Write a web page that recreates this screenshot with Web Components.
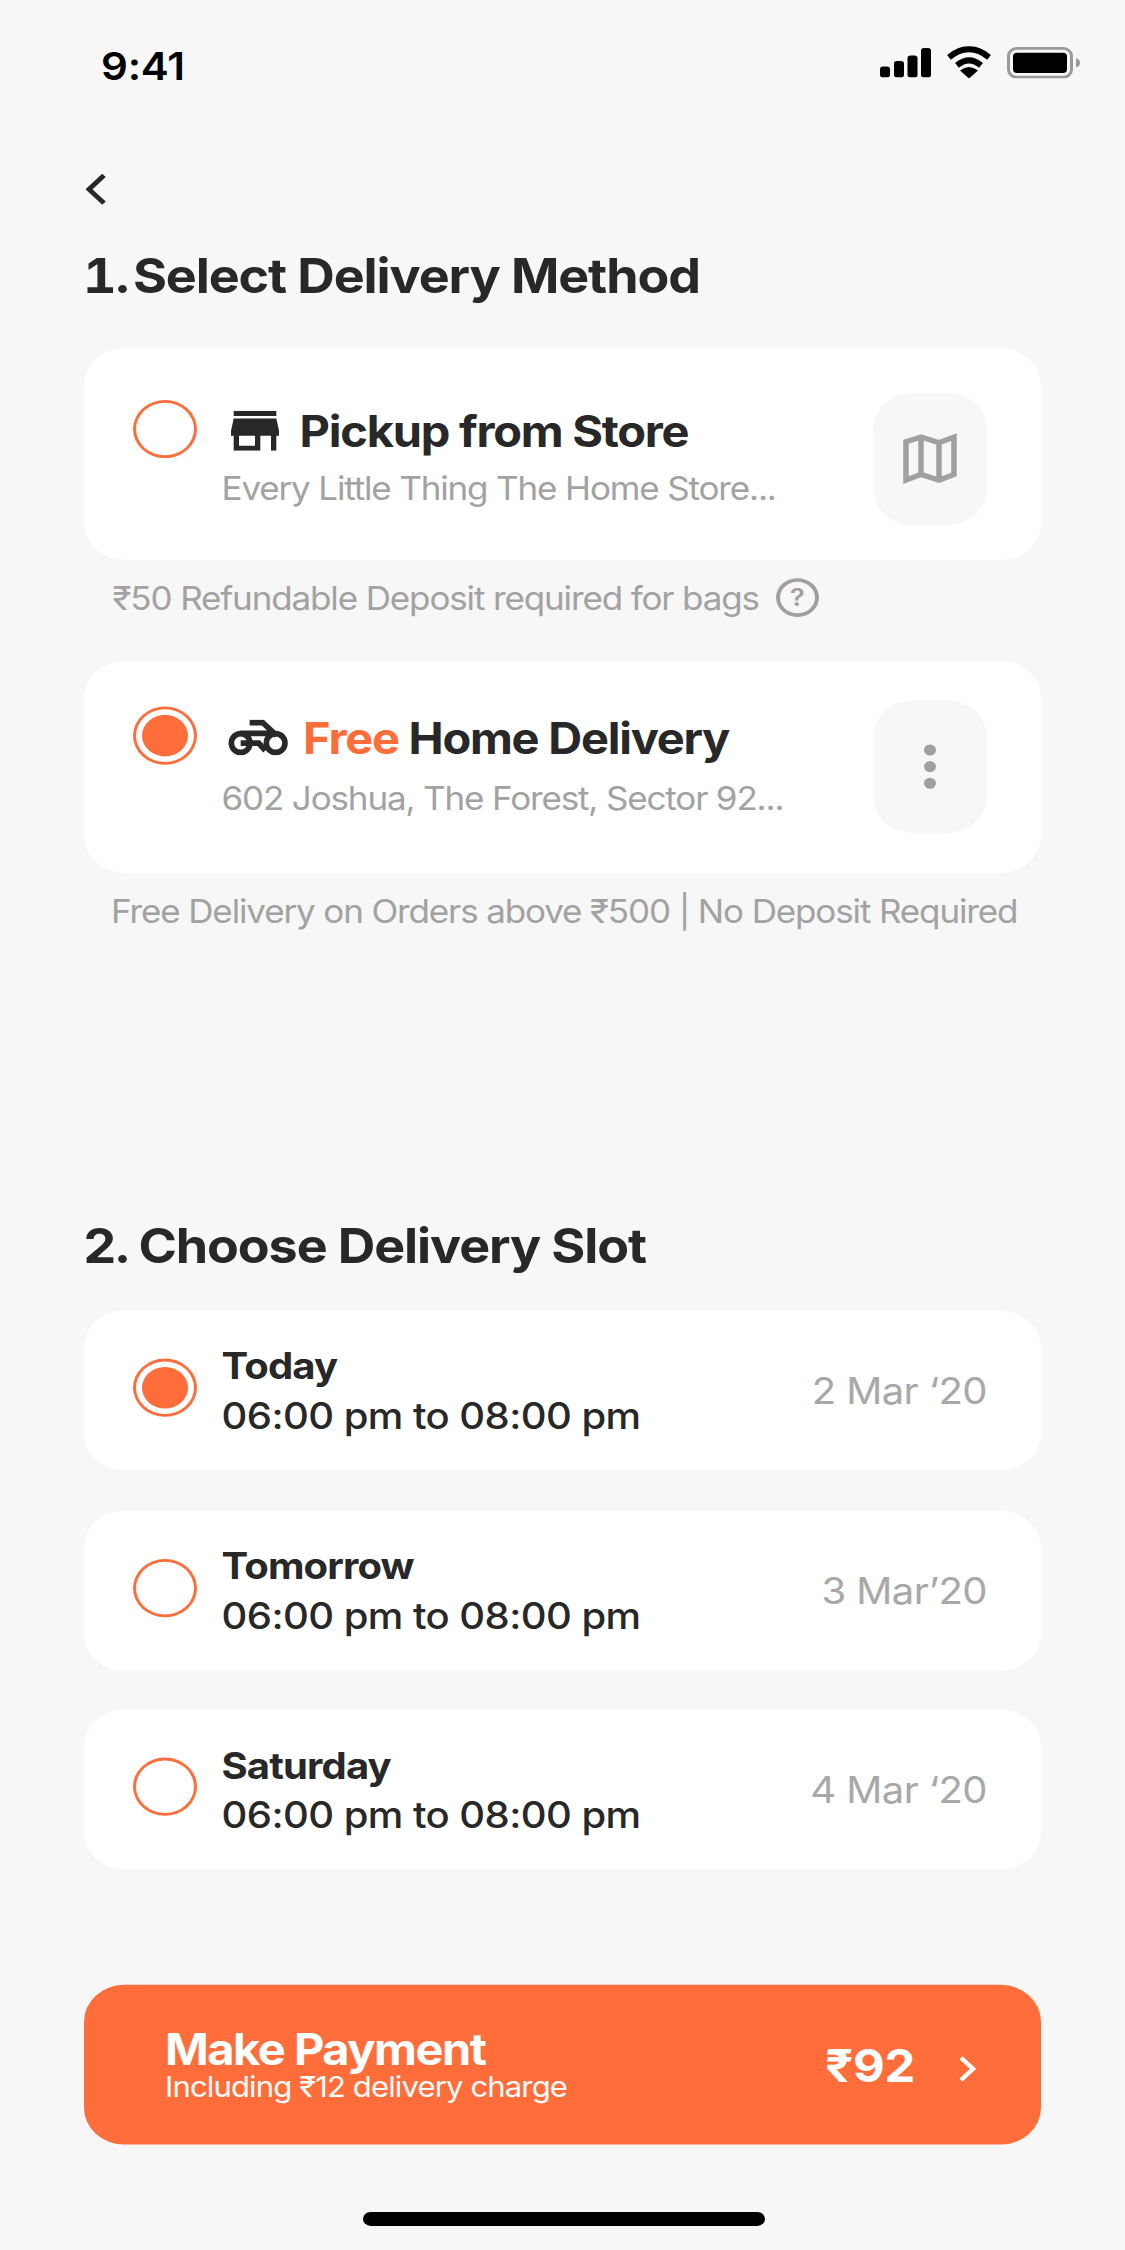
<!DOCTYPE html>
<html lang="en"><head><meta charset="utf-8"><title>Delivery</title>
<style>
html,body{margin:0;padding:0;height:2250px;overflow:hidden;background:#f7f7f7;font-family:Inter,"Noto Sans",sans-serif;color:#282828}
</style></head><body>
<app-screen>
  <status-bar></status-bar>
  <back-link></back-link>
  <section-title num="1." style="--num-gap:4.500px">Select Delivery Method</section-title>
  <method-card style="--top:61.500px;--gap:13px;--radio:56px;--tile:48px;margin-top:48px" tile="map" sub="Every Little Thing The Home Store...">
    <svg slot="icon" width="48" height="43" viewBox="3 4 18 16" preserveAspectRatio="none" style="margin:0 20.600px 0 9.500px"><path fill="#282828" d="M20 4H4v2h16V4zm1 10v-2l-1-5H4l-1 5v2h1v6h10v-6h4v6h2v-6h1zm-9 4H6v-4h6v4z"/></svg>
    Pickup from Store
  </method-card>
  <note-line style="margin-top:20px;margin-left:112.500px">₹50 Refundable Deposit required for bags<help-mark>?</help-mark></note-line>
  <method-card checked style="--top:54.500px;--gap:17px;--radio:48.500px;--tile:42px;margin-top:48.500px" tile="more" sub="602 Joshua, The Forest, Sector 92...">
    <svg slot="icon" width="60" height="39" viewBox="0 0 180 107" preserveAspectRatio="none" style="margin:0 15px 0 6.500px"><g fill="none" stroke="#282828" stroke-width="17"><circle cx="38" cy="70" r="28"/><circle cx="143" cy="70" r="28"/><path d="M38 70H92L112 92M38 41H128M65 9H104L146 48"/></g></svg>
    <span style="color:#ff6d3a">Free</span>&nbsp;Home Delivery
  </method-card>
  <note-line style="margin-top:21px;margin-left:111px">Free Delivery on Orders above ₹500 | No Deposit Required</note-line>
  <section-title num="2." style="margin-top:313px;--num-gap:10px">Choose Delivery Slot</section-title>
  <slot-card style="margin-top:40px" checked day="Today" date="2 Mar ‘20"></slot-card>
  <slot-card style="margin-top:44px" day="Tomorrow" date="3 Mar’20"></slot-card>
  <slot-card style="margin-top:42.500px" day="Saturday" date="4 Mar ‘20"></slot-card>
  <pay-button></pay-button>
  <home-bar></home-bar>
</app-screen>
<script>
function def(name, css, html){
  customElements.define(name, class extends HTMLElement{
    connectedCallback(){
      if(this.shadowRoot) return;
      const r=this.attachShadow({mode:'open'});
      r.innerHTML='<style>'+css+'</style>'+(typeof html==='function'?html(this):html);
    }
  });
}
def('app-screen',`:host{display:block;width:1125px;height:2250px;overflow:hidden;background:#f7f7f7}
 .s{height:2436px;transform:scaleY(.9236);transform-origin:0 0}`,'<div class="s"><slot></slot></div>');
def('status-bar',`:host{display:flex;justify-content:space-between;align-items:center;height:50px;padding:47px 44px 0 101px}
 b{font:600 42px/50px Inter,sans-serif;color:#000;letter-spacing:-.2px}
 div{display:flex;align-items:center;gap:15px;margin-top:-9px}
 svg{display:block}`,
 `<b>9:41</b><div>
 <svg width="51" height="32" viewBox="0 0 51 32"><g fill="#000"><rect x="0" y="20" width="10" height="12" rx="3"/><rect x="14" y="14" width="10" height="18" rx="3"/><rect x="27.500" y="8" width="10" height="24" rx="3"/><rect x="41" y="0" width="10" height="32" rx="3"/></g></svg>
 <svg width="46" height="35" viewBox="0 0 46 32" preserveAspectRatio="none"><path d="M3 11Q23-5 43 11M11 19Q23 9 35 19" fill="none" stroke="#000" stroke-width="6"/><path d="M23 32L14 24Q23 17 32 24Z" fill="#000"/></svg>
 <svg width="74" height="34" viewBox="0 0 74 34"><rect x="1.500" y="1.500" width="63" height="31" rx="8" fill="none" stroke="#9a9a9a" stroke-width="3"/><rect x="6" y="6" width="54" height="22" rx="4" fill="#000"/><path d="M69 12Q73 13 73 17T69 22Z" fill="#9a9a9a"/></svg></div>`);
def('back-link',':host{display:block;margin:91px 0 0 85px;width:21px;height:34px}svg{display:block}',
 '<svg width="21" height="34" viewBox="0 0 21 34"><path d="M19 2L4 17L19 32" fill="none" stroke="#282828" stroke-width="5"/></svg>');
def('section-title',`:host{display:flex;margin:47px 84px 0 83px;font:700 52px/60px Inter,sans-serif;color:#282828;letter-spacing:-1.1px;white-space:nowrap}
 span{margin-right:var(--num-gap,4px);font-variant-numeric:tabular-nums}`,el=>`<span>${el.getAttribute('num')}</span><slot></slot>`);
def('radio-mark',`:host{display:block;box-sizing:border-box;width:64px;height:63px;border:3.500px solid #ff6d3a;border-radius:50%;padding:6px;background:#fff}
 i{display:none;width:100%;height:100%;border-radius:50%;background:#ff6d3a}
 :host([checked]) i{display:block}`,'<i></i>');
def('method-card',`:host{display:grid;grid-template-columns:64px 1fr 114px;column-gap:24.500px;box-sizing:border-box;height:228.500px;margin:0 84px;padding:0 54px 0 49px;background:#fff;border-radius:40px}
 radio-mark{margin-top:var(--radio)}
 .t{padding-top:var(--top);min-width:0}
 .h{display:flex;align-items:center;font:700 47px/56px Inter,sans-serif;letter-spacing:-1.25px;color:#282828;white-space:nowrap}
 .s{margin-top:var(--gap);font:400 35px/40px Inter,sans-serif;color:#a2a2a2;letter-spacing:-1.15px;white-space:nowrap}
 tile-button{margin-top:var(--tile)}`,
 el=>`<radio-mark ${el.hasAttribute('checked')?'checked':''}></radio-mark><div class="t"><div class="h"><slot name="icon"></slot><slot></slot></div><div class="s">${el.getAttribute('sub')}</div></div><tile-button kind="${el.getAttribute('tile')}"></tile-button>`);
def('tile-button',':host{display:flex;align-items:center;justify-content:center;width:114px;height:144px;border-radius:40px;background:#f7f7f7}svg{display:block}',
 el=>el.getAttribute('kind')==='map'
 ?'<svg width="54" height="56" viewBox="0 0 54 54" preserveAspectRatio="none" style="margin-top:-3px"><path d="M3 10L18 5L36 11L51 5V44L36 50L18 44L3 50ZM18 5V44M36 11V50" fill="none" stroke="#a0a0a0" stroke-width="5.500"/></svg>'
 :'<svg width="14" height="50" viewBox="0 0 14 50"><g fill="#a0a0a0"><circle cx="7" cy="7" r="6"/><circle cx="7" cy="25" r="6"/><circle cx="7" cy="43" r="6"/></g></svg>');
def('note-line',':host{display:flex;align-items:center;font:400 35px/40px Inter,sans-serif;color:#a2a2a2;letter-spacing:-1.13px;white-space:nowrap}','<slot></slot>');
def('help-mark',':host{display:flex;align-items:center;justify-content:center;box-sizing:border-box;width:43px;height:42px;margin-left:17px;border:4.500px solid #a0a0a0;border-radius:50%;font:600 27px/1 Inter,sans-serif;color:#a0a0a0;letter-spacing:0}','<slot></slot>');
def('slot-card',`:host{display:grid;grid-template-columns:64px 1fr auto;column-gap:24.500px;box-sizing:border-box;height:173px;margin:0 84px;padding:0 54px 0 49px;background:#fff;border-radius:40px}
 radio-mark{margin-top:52px}
 .b{padding-top:37.500px}
 .d{font:700 40px/46px Inter,sans-serif;color:#282828;letter-spacing:-.85px}
 .w{margin-top:7.500px;font:500 40px/46px Inter,sans-serif;color:#282828;letter-spacing:-.55px}
 .r{padding-top:64px;font:400 40px/46px Inter,sans-serif;color:#a8a8a8;letter-spacing:-.6px}`,
 el=>`<radio-mark ${el.hasAttribute('checked')?'checked':''}></radio-mark><div class="b"><div class="d">${el.getAttribute('day')}</div><div class="w">06:00 pm to 08:00 pm</div></div><div class="r">${el.getAttribute('date')}</div>`);
def('pay-button',`:host{display:flex;justify-content:space-between;box-sizing:border-box;height:173px;margin:124.500px 84px 0;padding:42px 65px 0 81px;background:#ff6d3a;border-radius:40px;color:#fff}
 .m{font:700 47px/56px Inter,sans-serif;letter-spacing:-1.5px}
 .i{margin-top:-7px;font:400 31px/38px Inter,sans-serif;letter-spacing:-.85px}
 .a{display:flex;align-items:flex-start;gap:43px;padding-top:18px;font:700 49px/56px Inter,sans-serif;letter-spacing:-.3px}
 svg{display:block;margin-top:17px}`,
 `<div><div class="m">Make Payment</div><div class="i">Including ₹12 delivery charge</div></div><div class="a">₹92<svg width="18" height="28" viewBox="0 0 18 28"><path d="M3 2L15 14L3 26" fill="none" stroke="#fff" stroke-width="4.500"/></svg></div>`);
def('home-bar',':host{display:block;width:402px;height:15px;margin:73px 0 0 363px;border-radius:8px;background:#000}','');
</script>
</body></html>
